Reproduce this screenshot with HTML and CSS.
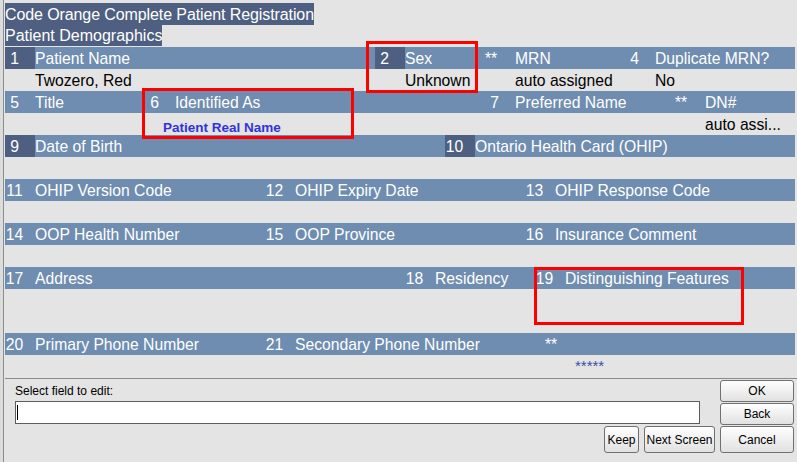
FILE: index.html
```html
<!DOCTYPE html>
<html>
<head>
<meta charset="utf-8">
<title>Code Orange Complete Patient Registration</title>
<link rel="stylesheet" href="styles.css">
</head>
<body>
<div class="window">
  <div class="form">
    <div class="heading">Code Orange Complete Patient Registration</div>
    <div class="heading sub">Patient Demographics</div>

    <div class="row bar ra">
      <div class="cell"><span class="num req">1</span><span class="lab">Patient Name</span></div>
      <div class="cell"><span class="num req">2</span><span class="lab">Sex</span></div>
      <div class="cell"><span class="num star">**</span><span class="lab">MRN</span></div>
      <div class="cell"><span class="num">4</span><span class="lab">Duplicate MRN?</span></div>
    </div>
    <div class="row ra">
      <div class="cell"><span class="v">Twozero, Red</span></div>
      <div class="cell"><span class="v">Unknown</span></div>
      <div class="cell"><span class="v">auto assigned</span></div>
      <div class="cell"><span class="v">No</span></div>
    </div>

    <div class="row bar rb">
      <div class="cell"><span class="num">5</span><span class="lab">Title</span></div>
      <div class="cell"><span class="num">6</span><span class="lab">Identified As</span></div>
      <div class="cell"><span class="num">7</span><span class="lab">Preferred Name</span></div>
      <div class="cell"><span class="num star">**</span><span class="lab">DN#</span></div>
    </div>
    <div class="row rb">
      <div class="cell"></div>
      <div class="cell"><span class="real">Patient Real Name</span></div>
      <div class="cell"></div>
      <div class="cell"><span class="v">auto assi...</span></div>
    </div>

    <div class="row bar rc">
      <div class="cell"><span class="num req">9</span><span class="lab">Date of Birth</span></div>
      <div class="cell"><span class="num req">10</span><span class="lab">Ontario Health Card (OHIP)</span></div>
    </div>
    <div class="row rc"></div>

    <div class="row bar rd">
      <div class="cell"><span class="num">11</span><span class="lab">OHIP Version Code</span></div>
      <div class="cell"><span class="num">12</span><span class="lab">OHIP Expiry Date</span></div>
      <div class="cell"><span class="num">13</span><span class="lab">OHIP Response Code</span></div>
    </div>
    <div class="row rd"></div>

    <div class="row bar rd">
      <div class="cell"><span class="num">14</span><span class="lab">OOP Health Number</span></div>
      <div class="cell"><span class="num">15</span><span class="lab">OOP Province</span></div>
      <div class="cell"><span class="num">16</span><span class="lab">Insurance Comment</span></div>
    </div>
    <div class="row rd"></div>

    <div class="row bar rf">
      <div class="cell"><span class="num">17</span><span class="lab">Address</span></div>
      <div class="cell"><span class="num">18</span><span class="lab">Residency</span></div>
      <div class="cell"><span class="num">19</span><span class="lab">Distinguishing Features</span></div>
    </div>
    <div class="row rf tall"></div>

    <div class="row bar rg">
      <div class="cell"><span class="num">20</span><span class="lab">Primary Phone Number</span></div>
      <div class="cell"><span class="num">21</span><span class="lab">Secondary Phone Number</span></div>
      <div class="cell"><span class="num star">**</span><span class="lab"></span></div>
    </div>
    <div class="row rg">
      <div class="cell"></div>
      <div class="cell"></div>
      <div class="cell"><span class="stars">*****</span></div>
    </div>
  </div>

  <div class="footer">
    <div class="prompt">Select field to edit:</div>
    <div class="entry"><span class="caret"></span></div>
    <button class="btn ok">OK</button>
    <button class="btn back">Back</button>
    <button class="btn keep">Keep</button>
    <button class="btn next">Next Screen</button>
    <button class="btn cancel">Cancel</button>
  </div>
</div>

<div class="mark m1"></div>
<div class="mark m2"></div>
<div class="mark m3"></div>
</body>
</html>
```
FILE: styles.css
```css
html, body {
  margin: 0;
  padding: 0;
}
body {
  width: 797px;
  height: 462px;
  overflow: hidden;
  position: relative;
  background: #dcdcdc;
  font-family: "Liberation Sans", Arial, sans-serif;
  font-size: 16px;
  color: #000;
}
.window {
  margin-left: 3px;
  border-left: 1px solid #8e8e8e;
  padding-left: 1px;
  height: 462px;
  box-sizing: border-box;
  background: #e4e4e4;
}
.form {
  padding-top: 3px;
  width: 790px;
}
.heading {
  width: fit-content;
  background: #4f5f81;
  color: #fff;
  height: 22px;
  line-height: 21px;
  padding-top: 1px;
  box-sizing: border-box;
  white-space: nowrap;
  letter-spacing: -0.1px;
}
.heading.sub {
  height: 21px;
  line-height: 20px;
  margin-bottom: 1px;
  letter-spacing: 0;
}
.row {
  display: grid;
  width: 790px;
  height: 22px;
  font-size: 15.7px;
}
.row.tall {
  height: 44px;
}
.bar {
  background: #6f8db0;
  color: #fff;
}
.ra { grid-template-columns: 370px 110px 140px 170px; }
.rb { grid-template-columns: 140px 340px 190px 120px; }
.rc { grid-template-columns: 440px 350px; }
.rd { grid-template-columns: 260px 260px 270px; }
.rf { grid-template-columns: 400px 130px 260px; }
.rg { grid-template-columns: 260px 280px 250px; }

.cell {
  display: flex;
  height: 22px;
  min-width: 0;
  white-space: nowrap;
}
.num, .lab, .v {
  height: 22px;
  box-sizing: border-box;
  padding-top: 2px;
  line-height: 20px;
}
.num {
  flex: none;
  width: 30px;
  padding-right: 11px;
  text-align: center;
}
.num.req {
  background: #4f5f81;
}
.num.star {
  text-align: left;
  padding-right: 0;
}
.v {
  padding-left: 30px;
  color: #000;
}
.real {
  padding-left: 18px;
  padding-top: 4px;
  line-height: 22px;
  color: #3333dd;
  font-weight: bold;
  font-size: 13.5px;
}
.stars {
  padding-left: 30px;
  line-height: 22px;
  color: #3c4ca4;
  font-size: 15px;
}

.footer {
  margin-top: 1px;
  border-top: 1px solid #8b8b8b;
  padding: 1px 0 0 10px;
  display: grid;
  grid-template-columns: 584px 35px 71px 74px;
  grid-template-rows: 22px 22px 27px;
  column-gap: 5px;
  row-gap: 1px;
  font-size: 12px;
}
.prompt {
  grid-column: 1 / 4;
  grid-row: 1;
  line-height: 22px;
}
.entry {
  grid-column: 1 / 4;
  grid-row: 2;
  align-self: start;
  margin: -2px 15px 0 0;
  height: 23px;
  border: 1px solid #5c5c5c;
  background: #fff;
  box-sizing: border-box;
  padding: 2px 0 0 1px;
}
.caret {
  display: block;
  width: 1px;
  height: 15px;
  margin-top: 1px;
  background: #000;
}
.btn {
  margin: 0;
  padding: 0;
  border: 1px solid #707070;
  border-radius: 3px;
  background: linear-gradient(#fefefe, #e1e1e1);
  font-family: "Liberation Sans", Arial, sans-serif;
  font-size: 12px;
  color: #000;
  white-space: nowrap;
}
.ok { grid-column: 4; grid-row: 1; }
.back { grid-column: 4; grid-row: 2; }
.keep { grid-column: 2; grid-row: 3; }
.next { grid-column: 3; grid-row: 3; }
.cancel { grid-column: 4; grid-row: 3; }

.mark {
  position: absolute;
  border: 3px solid #ff0000;
  box-sizing: border-box;
}
.m1 { left: 366px; top: 41px; width: 112px; height: 52px; }
.m2 { left: 142px; top: 88px; width: 212px; height: 51px; }
.m3 { left: 534px; top: 267px; width: 210px; height: 58px; }
```
